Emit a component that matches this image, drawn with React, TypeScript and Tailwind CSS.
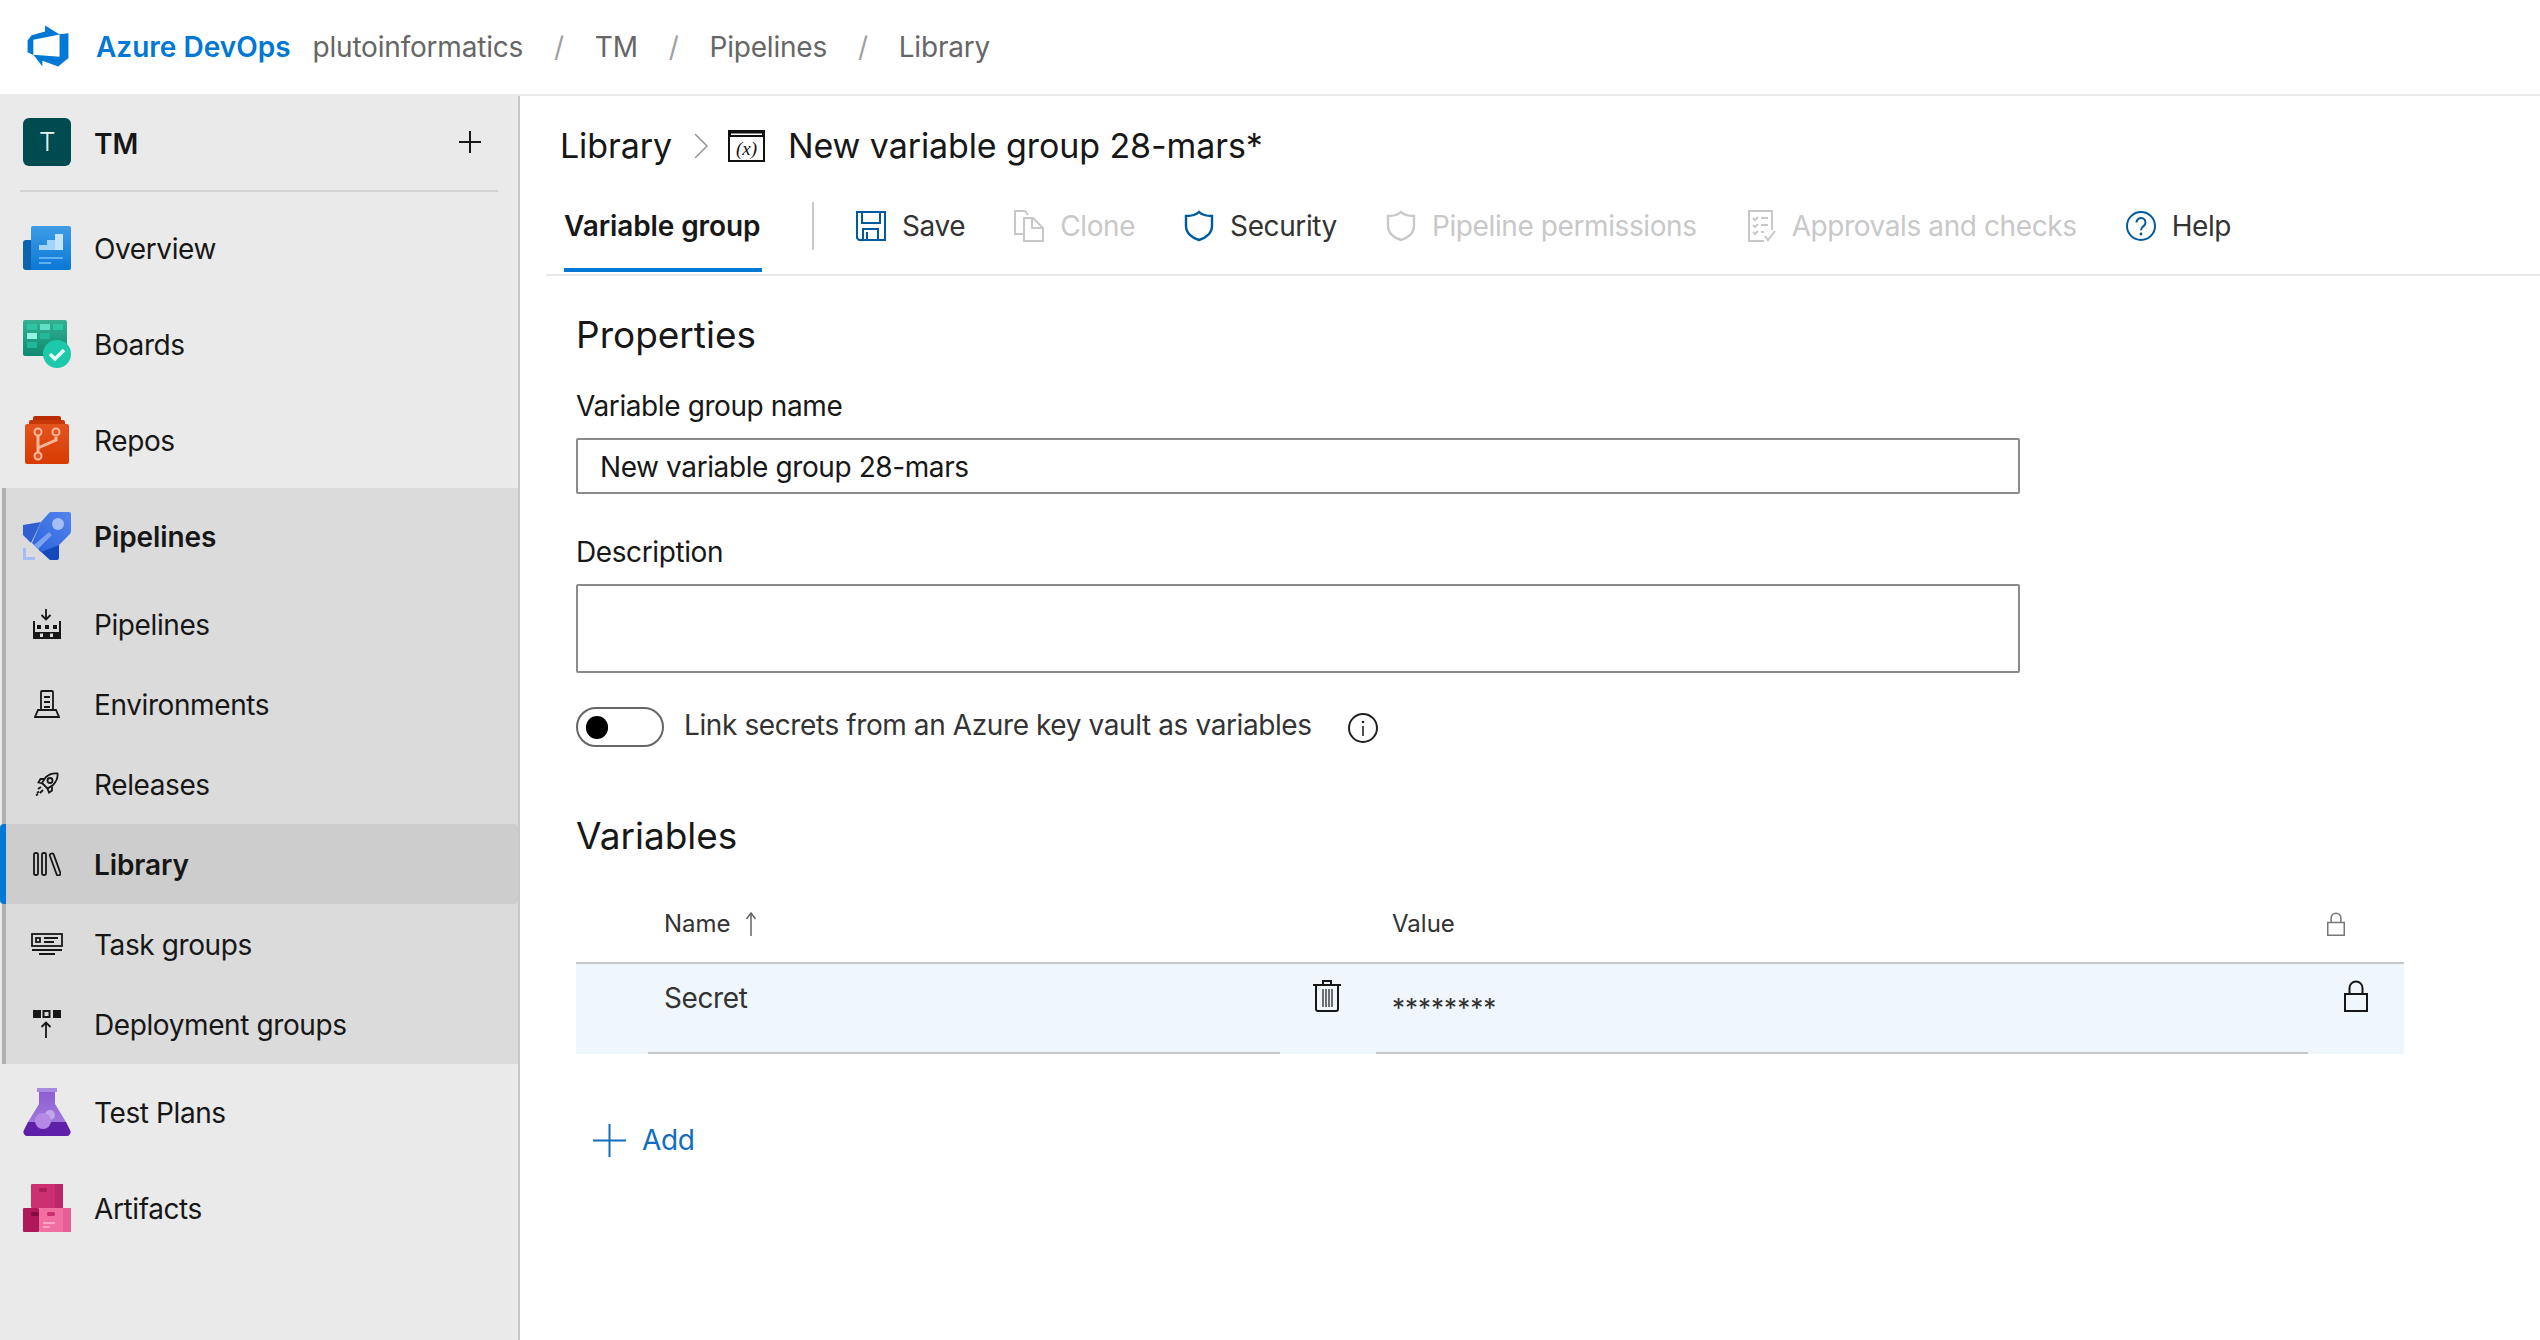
import type { ReactNode } from "react";

function DevOpsLogo() {
  return (
    <svg className="mb-[3px]" width="46" height="46" viewBox="0 0 18 18" aria-hidden="true">
      <path
        fill="#0078d4"
        d="M17 4v9.74l-4 3.28-6.2-2.26V17L3.29 12.41l10.23.8V4.44Zm-3.41.49L7.85 1V3.29L2.58 4.84 1 6.87v4.61l2.26 1V6.57Z"
      />
    </svg>
  );
}

function OverviewIcon() {
  return (
    <svg width="48" height="44" viewBox="0 0 48 44" aria-hidden="true">
      <defs>
        <linearGradient id="ov" x1="0" y1="0" x2="0" y2="1">
          <stop offset="0" stopColor="#3f9de6" />
          <stop offset="1" stopColor="#0a78d6" />
        </linearGradient>
      </defs>
      <path d="M3 14h8v30H3a3 3 0 0 1-3-3V17a3 3 0 0 1 3-3z" fill="#0f62ae" />
      <path d="M10 0h36a2 2 0 0 1 2 2v40a2 2 0 0 1-2 2H8V2a2 2 0 0 1 2-2z" fill="url(#ov)" />
      <rect x="16" y="19" width="8" height="5" fill="#a5d4fb" />
      <rect x="24" y="14" width="8" height="10" fill="#a5d4fb" />
      <rect x="32" y="8" width="8" height="16" fill="#c4e3fd" />
      <rect x="16" y="31" width="24" height="2" fill="#5fb2f2" />
      <rect x="16" y="36" width="12" height="2" fill="#5fb2f2" />
    </svg>
  );
}

function BoardsIcon() {
  return (
    <svg width="48" height="48" viewBox="0 0 48 48" aria-hidden="true">
      <defs>
        <linearGradient id="bd" x1="0" y1="0" x2="0" y2="1">
          <stop offset="0" stopColor="#37b092" />
          <stop offset="1" stopColor="#0e8a70" />
        </linearGradient>
      </defs>
      <rect width="44" height="36" y="0" rx="2" fill="url(#bd)" />
      <rect x="4" y="4" width="10" height="6" fill="#2dc5a4" />
      <rect x="17" y="4" width="10" height="6" fill="#5fe0c6" />
      <rect x="30" y="4" width="10" height="6" fill="#2dc5a4" />
      <rect x="4" y="13" width="10" height="6" fill="#8ff5e0" />
      <rect x="17" y="13" width="10" height="6" fill="#1fb899" />
      <rect x="4" y="22" width="10" height="6" fill="#1fb899" />
      <circle cx="34" cy="34" r="14" fill="#1ec8aa" />
      <path d="M27 34l5 5 9-9" fill="none" stroke="#e6fff9" strokeWidth="3.5" />
    </svg>
  );
}

function ReposIcon() {
  return (
    <svg width="48" height="48" viewBox="0 0 48 48" aria-hidden="true">
      <defs>
        <linearGradient id="rp" x1="0" y1="0" x2="0" y2="1">
          <stop offset="0" stopColor="#e2541f" />
          <stop offset="1" stopColor="#d83b01" />
        </linearGradient>
      </defs>
      <rect x="10" y="0" width="28" height="8" rx="2" fill="#b92d00" />
      <rect x="6" y="4" width="36" height="8" rx="2" fill="#c73806" />
      <rect x="2" y="8" width="44" height="40" rx="2" fill="url(#rp)" />
      <path d="M15 20v17M33 21v3l-18 8" fill="none" stroke="#fbb79a" strokeWidth="3" />
      <circle cx="15" cy="16" r="3.5" fill="#e2541f" stroke="#fbb79a" strokeWidth="2" />
      <circle cx="33" cy="16" r="3.5" fill="#e2541f" stroke="#fbb79a" strokeWidth="2" />
      <circle cx="15" cy="40" r="3.5" fill="#e2541f" stroke="#fbb79a" strokeWidth="2" />
    </svg>
  );
}

function PipelinesIcon() {
  return (
    <svg width="48" height="48" viewBox="0 0 48 48" aria-hidden="true">
      <defs>
        <linearGradient id="pl" x1="1" y1="0" x2="0" y2="1">
          <stop offset="0" stopColor="#5585ec" />
          <stop offset="1" stopColor="#2a62dc" />
        </linearGradient>
      </defs>
      <path d="M0 13l18-3-10 21-8-8z" fill="#2f5fd0" />
      <path d="M36 26v20a2 2 0 0 1-2 2h-7L16 38z" fill="#1448bd" />
      <path d="M18 10L26 1a4 4 0 0 1 2-1h18a2 2 0 0 1 2 2v18a4 4 0 0 1-1 2L36 33l-18 7-9-9z" fill="url(#pl)" />
      <circle cx="35" cy="12" r="6" fill="#a5bff5" />
      <path d="M11 33l15-13 3 3-14 14z" fill="#7ba2f0" />
      <path d="M0 36h3v9h9v3H0z" fill="#a3bdf7" />
    </svg>
  );
}

function PipelineSubIcon() {
  return (
    <svg width="28" height="30" viewBox="0 0 28 30" fill="#171717" aria-hidden="true">
      <path d="M13 0v10M8.500 6l4.500 4.500L17.500 6" fill="none" stroke="#171717" strokeWidth="1.8" />
      <rect x="0" y="12" width="2" height="18" />
      <rect x="26" y="12" width="2" height="18" />
      <rect x="4" y="16" width="4" height="4" />
      <rect x="12" y="16" width="4" height="4" />
      <rect x="20" y="16" width="4" height="4" />
      <path fillRule="evenodd" d="M0 23h28v7H0zM7 24.500v3.500h3v-3.500zM17 24.500v3.500h3v-3.500z" />
    </svg>
  );
}

function EnvironmentIcon() {
  return (
    <svg width="26" height="28" viewBox="0 0 26 28" fill="none" stroke="#171717" strokeWidth="1.8" aria-hidden="true">
      <path d="M7 20V2a1 1 0 0 1 1-1h10a1 1 0 0 1 1 1v18" />
      <path d="M10 7h6M10 12h6M10 17h6" />
      <path d="M4 20h18l3 7H1z" />
    </svg>
  );
}

function ReleaseIcon() {
  return (
    <svg width="24" height="24" viewBox="0 0 24 24" fill="none" stroke="#171717" strokeWidth="1.8" aria-hidden="true">
      <path d="M22.500 1.500c-5-.5-9 1-12 4L7 11l5.500 5.500 5.500-3.500c3-3 5-7.500 4.500-11.500z" />
      <circle cx="15" cy="8.500" r="2.500" />
      <path d="M9 7H5.500L3.500 10.500l4 1M17 14.500v4l-3 2-1.500-4" />
      <path d="M6 15l-3 2M8 18l-3 3M4 19.500L2 21M3 22l-2 1.500" />
    </svg>
  );
}

function LibraryIcon() {
  return (
    <svg width="28" height="24" viewBox="0 0 28 24" fill="none" stroke="#171717" strokeWidth="1.8" aria-hidden="true">
      <rect x="1" y="1" width="4" height="22" rx="1.5" />
      <rect x="9" y="1" width="4" height="22" rx="1.5" />
      <rect x="20" y="1" width="4" height="23" rx="1.5" transform="rotate(-20 22 12)" />
    </svg>
  );
}

function TaskGroupIcon() {
  return (
    <svg width="32" height="22" viewBox="0 0 32 22" fill="none" stroke="#171717" strokeWidth="1.8" aria-hidden="true">
      <rect x="1" y="1" width="30" height="12" />
      <rect x="5" y="5" width="4" height="4" />
      <path d="M13 5h14M13 9h10M1 17h30M8 21h16" />
    </svg>
  );
}

function DeploymentIcon() {
  return (
    <svg width="28" height="28" viewBox="0 0 28 28" aria-hidden="true">
      <rect x="0" y="0" width="8" height="8" fill="#171717" />
      <rect x="10.500" y="1" width="6" height="6" fill="none" stroke="#171717" strokeWidth="2" />
      <rect x="20" y="0" width="8" height="8" fill="#171717" />
      <path d="M13 28V13M8.500 17L13 12.500 17.500 17" fill="none" stroke="#171717" strokeWidth="1.8" />
    </svg>
  );
}

function TestPlansIcon() {
  return (
    <svg width="48" height="48" viewBox="0 0 48 48" aria-hidden="true">
      <defs>
        <linearGradient id="tp" x1="0" y1="0" x2="0" y2="1">
          <stop offset="0" stopColor="#8c5fd0" />
          <stop offset="1" stopColor="#a078de" />
        </linearGradient>
      </defs>
      <rect x="14" y="0" width="20" height="4" fill="#a88ae0" />
      <path d="M16 4h16v12l11 18H5l11-18z" fill="url(#tp)" />
      <path d="M5 34h38l4 8a4 4 0 0 1-4 6H5a4 4 0 0 1-4-6z" fill="#5f1fa8" />
      <circle cx="27" cy="27" r="5" fill="#c3a6ec" />
      <circle cx="20" cy="33" r="8" fill="#b48ae6" />
    </svg>
  );
}

function ArtifactsIcon() {
  return (
    <svg width="48" height="48" viewBox="0 0 48 48" aria-hidden="true">
      <rect x="8" y="0" width="32" height="24" rx="1" fill="#cc3070" />
      <rect x="32" y="0" width="8" height="24" fill="#b82866" />
      <rect x="16" y="4" width="8" height="4" rx="1.5" fill="#a8205a" />
      <rect x="0" y="24" width="16" height="24" rx="1" fill="#b0185a" />
      <rect x="8" y="28" width="8" height="4" rx="1.5" fill="#800f40" />
      <rect x="16" y="24" width="32" height="24" rx="1" fill="#f26fa2" />
      <rect x="40" y="24" width="8" height="24" fill="#e65f94" />
      <rect x="24" y="28" width="8" height="4" rx="1.5" fill="#cc3070" />
      <rect x="20" y="38" width="12" height="2" fill="#fba3c5" />
      <rect x="20" y="42" width="7" height="2" fill="#fba3c5" />
    </svg>
  );
}

function VariableGroupIcon() {
  return (
    <svg className="shrink-0" width="37" height="32" viewBox="0 0 37 32" aria-hidden="true">
      <rect x="1" y="1" width="35" height="30" fill="none" stroke="#111" strokeWidth="2" />
      <rect x="1" y="1" width="35" height="6" fill="#111" />
      <rect x="3" y="3.500" width="31" height="1.500" fill="#fff" />
      <text x="18.500" y="25" textAnchor="middle" fontSize="19" fontStyle="italic" fontFamily="'Liberation Serif', serif" fill="#111">(x)</text>
    </svg>
  );
}

function SaveIcon() {
  return (
    <svg width="30" height="30" viewBox="0 0 30 30" fill="none" stroke="#005a9e" strokeWidth="2" aria-hidden="true">
      <path d="M1 1h28v28H3l-2-2z" />
      <path d="M6 1v11h18V1M7 29V18h15v11M11 21v8" />
    </svg>
  );
}

function CloneIcon() {
  return (
    <svg width="30" height="32" viewBox="0 0 30 32" fill="none" stroke="#c8c8c8" strokeWidth="2" aria-hidden="true">
      <path d="M10 24H1V1h10l3 4" />
      <path d="M10 8h9l10 10v13H10z" />
      <path d="M18 8v10h11" />
    </svg>
  );
}

function ShieldIcon({ color }: { color: string }) {
  return (
    <svg width="30" height="32" viewBox="0 0 30 32" fill="none" stroke={color} strokeWidth="2.4" aria-hidden="true">
      <path d="M15 2c3 3 7 4 13 4v10c0 7-6 12-13 14C8 28 2 23 2 16V6c6 0 10-1 13-4z" />
    </svg>
  );
}

function ChecksIcon() {
  return (
    <svg width="28" height="32" viewBox="0 0 28 32" fill="none" stroke="#c8c8c8" strokeWidth="2" aria-hidden="true">
      <path d="M24 20V1H1v30h15" />
      <path d="M5 8l2 2 3-3M5 15l2 2 3-3M5 22l2 2 3-3M13 8h7M13 15h7M13 22h3M17 26l3 4 7-9" />
    </svg>
  );
}

function HelpIcon() {
  return (
    <svg width="30" height="30" viewBox="0 0 30 30" aria-hidden="true">
      <circle cx="15" cy="15" r="14" fill="none" stroke="#005a9e" strokeWidth="2" />
      <path d="M10.500 11.500a4.500 4.500 0 1 1 7 3.700c-1.500 1-2.500 1.800-2.500 4" fill="none" stroke="#005a9e" strokeWidth="2" />
      <circle cx="15" cy="23" r="1.400" fill="#005a9e" />
    </svg>
  );
}

function InfoIcon() {
  return (
    <svg width="30" height="30" viewBox="0 0 30 30" aria-hidden="true">
      <circle cx="15" cy="15" r="14" fill="none" stroke="#222" strokeWidth="2" />
      <circle cx="15" cy="9" r="1.300" fill="#222" />
      <path d="M15 13v10" stroke="#222" strokeWidth="1.600" />
    </svg>
  );
}

function LockIcon({ color, w, h }: { color: string; w: number; h: number }) {
  return (
    <svg width={w} height={h} viewBox="0 0 24 32" fill="none" stroke={color} strokeWidth="2" aria-hidden="true">
      <rect x="1" y="14" width="22" height="17" />
      <path d="M5.500 14V8a6.500 6.500 0 0 1 13 0v6" />
    </svg>
  );
}

function TrashIcon() {
  return (
    <svg width="28" height="32" viewBox="0 0 28 32" fill="none" stroke="#171717" strokeWidth="2" aria-hidden="true">
      <path d="M0 5h28M10 5V1h8v4" />
      <path d="M3 5v24a2 2 0 0 0 2 2h18a2 2 0 0 0 2-2V5" />
      <path strokeWidth="1.200" d="M10 9v18M13 9v18M16 9v18M19 9v18" />
    </svg>
  );
}

function PlusIcon({ size, color, weight }: { size: number; color: string; weight: number }) {
  return (
    <svg width={size} height={size} viewBox={`0 0 ${size} ${size}`} stroke={color} strokeWidth={weight} aria-hidden="true">
      <path d={`M${size / 2} 0v${size}M0 ${size / 2}h${size}`} />
    </svg>
  );
}

type NavItem = { label: string; icon: ReactNode };

const TOP_ITEMS: NavItem[] = [
  { label: "Overview", icon: <OverviewIcon /> },
  { label: "Boards", icon: <BoardsIcon /> },
  { label: "Repos", icon: <ReposIcon /> },
];

const SUB_ITEMS: NavItem[] = [
  { label: "Pipelines", icon: <PipelineSubIcon /> },
  { label: "Environments", icon: <EnvironmentIcon /> },
  { label: "Releases", icon: <ReleaseIcon /> },
  { label: "Library", icon: <LibraryIcon /> },
  { label: "Task groups", icon: <TaskGroupIcon /> },
  { label: "Deployment groups", icon: <DeploymentIcon /> },
];

const BOTTOM_ITEMS: NavItem[] = [
  { label: "Test Plans", icon: <TestPlansIcon /> },
  { label: "Artifacts", icon: <ArtifactsIcon /> },
];

function TopNavRow({ item }: { item: NavItem }) {
  return (
    <div className="flex h-[96px] items-center">
      <div className="flex w-[94px] shrink-0 pl-[23px]">{item.icon}</div>
      <span className="pt-[2px] text-[#171717]">{item.label}</span>
    </div>
  );
}

function Sidebar() {
  return (
    <aside className="flex w-[520px] shrink-0 flex-col border-r-2 border-[#c8c8c8] bg-[#eaeaea]">
      <div className="flex h-[94px] items-center pb-[2px] pl-[23px] pr-[37px]">
        <div className="flex h-[48px] w-[48px] items-center justify-center rounded-md bg-[#004b50] text-[26px] font-light text-[#e8f4f4]">T</div>
        <span className="ml-[23px] flex-1 pt-[3px] font-semibold tracking-[-0.1px] text-[#171717]">TM</span>
        <PlusIcon size={22} color="#171717" weight={2} />
      </div>
      <div className="mx-[20px] h-[2px] bg-[#d2d2d2]" />
      <div className="mt-[8px]">
        {TOP_ITEMS.map((item) => (
          <TopNavRow key={item.label} item={item} />
        ))}
      </div>
      <div className="ml-[2px] border-l-[4px] border-[#b0b0b0] bg-[#dbdbdb]">
        <div className="flex h-[96px] items-center">
          <div className="flex w-[88px] shrink-0 pl-[17px]"><PipelinesIcon /></div>
          <span className="pt-[2px] font-semibold tracking-[-0.1px] text-[#171717]">Pipelines</span>
        </div>
        {SUB_ITEMS.map((item) => {
          const active = item.label === "Library";
          return (
            <div
              key={item.label}
              className={active
                ? "-ml-[6px] flex h-[80px] items-center rounded-[4px] border-l-[6px] border-[#0078d4] bg-[#cdcdcd] font-semibold tracking-[-0.1px]"
                : "flex h-[80px] items-center"}
            >
              <div className="flex w-[88px] shrink-0 justify-center pr-[6px]">{item.icon}</div>
              <span className="pt-[2px] text-[#171717]">{item.label}</span>
            </div>
          );
        })}
      </div>
      {BOTTOM_ITEMS.map((item) => (
        <TopNavRow key={item.label} item={item} />
      ))}
    </aside>
  );
}

function ToolbarItem({ icon, label, disabled }: { icon: ReactNode; label: string; disabled?: boolean }) {
  return (
    <div className="flex items-center gap-[16px]">
      {icon}
      <span className={disabled ? "text-[#c8c8c8]" : "text-[#333333]"}>{label}</span>
    </div>
  );
}

function Toolbar() {
  return (
    <div className="ml-[26px] flex h-[94px] items-center border-b-2 border-[#eaeaea] pb-[4px]">
      <div className="relative ml-[18px] flex h-full w-[198px] items-center font-semibold tracking-[-0.1px] text-[#171717]">
        Variable group
        <div className="absolute bottom-[-2px] left-0 h-[4px] w-full bg-[#0078d4]" />
      </div>
      <div className="ml-[50px] mr-[42px] h-[48px] w-[2px] bg-[#c8c8c8]" />
      <div className="flex items-center gap-[49px]">
        <ToolbarItem icon={<SaveIcon />} label="Save" />
        <ToolbarItem icon={<CloneIcon />} label="Clone" disabled />
        <ToolbarItem icon={<ShieldIcon color="#005a9e" />} label="Security" />
        <ToolbarItem icon={<ShieldIcon color="#c8c8c8" />} label="Pipeline permissions" disabled />
        <div className="ml-[2px]"><ToolbarItem icon={<ChecksIcon />} label="Approvals and checks" disabled /></div>
        <ToolbarItem icon={<HelpIcon />} label="Help" />
      </div>
    </div>
  );
}

function VariablesTable() {
  return (
    <div className="w-[1828px]">
      <div className="flex h-[72px] items-center border-b-2 border-[#c8c8c8] pb-[6px] text-[24px] tracking-[0] text-[#333333]">
        <div className="flex w-[800px] items-center gap-[14px] pl-[88px]">
          Name
          <svg width="12" height="24" viewBox="0 0 12 24" fill="none" stroke="#666666" strokeWidth="1.5" aria-hidden="true">
            <path d="M6 24V1M1.500 7L6 1l4.500 6" />
          </svg>
        </div>
        <div className="flex-1 pl-[16px]">Value</div>
        <div className="flex w-[96px] justify-center pr-[40px]">
          <LockIcon color="#777777" w={18} h={24} />
        </div>
      </div>
      <div className="flex h-[90px] bg-[#eff6fc]">
        <div className="w-[72px] shrink-0" />
        <div className="w-[632px] shrink-0 border-b-2 border-[#c8c8c8] pl-[16px] pt-[14px] text-[#333333]">Secret</div>
        <div className="flex w-[96px] shrink-0 justify-center pt-[16px] pr-[2px]">
          <TrashIcon />
        </div>
        <div className="w-[932px] shrink-0 border-b-2 border-[#c8c8c8] pl-[16px] pt-[24px] text-[26px] tracking-[0] text-[#333333]">********</div>
        <div className="flex w-[96px] shrink-0 justify-center pt-[16px]">
          <LockIcon color="#171717" w={24} h={32} />
        </div>
      </div>
    </div>
  );
}

export default function App() {
  return (
    <div
      className="flex h-[1340px] w-[2540px] flex-col overflow-hidden bg-white text-[28px] leading-[40px] tracking-[-0.4px]"
      style={{ fontFamily: "Inter, 'Noto Sans', sans-serif" }}
    >
      <header className="flex h-[96px] shrink-0 items-center border-b-2 border-[#eaeaea] pl-[25px]">
        <DevOpsLogo />
        <span className="ml-[25px] font-semibold tracking-[0] text-[#0078d4]">Azure DevOps</span>
        <span className="ml-[22px] tracking-[-0.2px] text-[#666666]">plutoinformatics</span>
        <span className="mx-[31px] text-[#a0a0a0]">/</span>
        <span className="tracking-[-0.2px] text-[#666666]">TM</span>
        <span className="mx-[31px] text-[#a0a0a0]">/</span>
        <span className="tracking-[-0.2px] text-[#666666]">Pipelines</span>
        <span className="mx-[31px] text-[#a0a0a0]">/</span>
        <span className="tracking-[-0.2px] text-[#666666]">Library</span>
      </header>
      <div className="flex min-h-0 flex-1">
        <Sidebar />
        <main className="min-w-0 flex-1">
          <div className="flex h-[86px] items-center pl-[40px] pt-[13px] text-[34px] tracking-[-0.1px] text-[#171717]">
            <span className="w-[133px]">Library</span>
            <svg className="mr-[19px] shrink-0" width="16" height="26" viewBox="0 0 16 26" fill="none" stroke="#999999" strokeWidth="1.6" aria-hidden="true">
              <path d="M2 1l12 12L2 25" />
            </svg>
            <VariableGroupIcon />
            <span className="ml-[23px]">New variable group 28-mars*</span>
          </div>
          <Toolbar />
          <div className="pl-[56px] text-[#171717]">
            <h2 className="mt-[35px] text-[37px] leading-[48px] tracking-[0]">Properties</h2>
            <div className="mt-[27px]">Variable group name</div>
            <div className="mt-[12px] flex h-[56px] w-[1444px] items-center rounded-[2px] border-2 border-[#8a8a8a] pl-[22px] pt-[2px]">New variable group 28-mars</div>
            <div className="mt-[38px]">Description</div>
            <div className="mt-[12px] h-[89px] w-[1444px] rounded-[2px] border-2 border-[#8a8a8a]" />
            <div className="mt-[34px] flex h-[40px] items-center">
              <div className="flex h-[40px] w-[88px] items-center rounded-full border-2 border-[#666666] pl-[8px]">
                <div className="h-[23px] w-[22px] rounded-full bg-black" />
              </div>
              <span className="mb-[4px] ml-[20px] text-[#333333]">Link secrets from an Azure key vault as variables</span>
              <div className="ml-[36px] mt-[2px]"><InfoIcon /></div>
            </div>
            <h2 className="mt-[65px] text-[37px] leading-[48px] tracking-[0]">Variables</h2>
            <div className="mt-[32px]"><VariablesTable /></div>
            <div className="ml-[17px] mt-[66px] flex items-center gap-[16px] text-[#106ebe]">
              <PlusIcon size={33} color="#106ebe" weight={2} />
              Add
            </div>
          </div>
        </main>
      </div>
    </div>
  );
}
